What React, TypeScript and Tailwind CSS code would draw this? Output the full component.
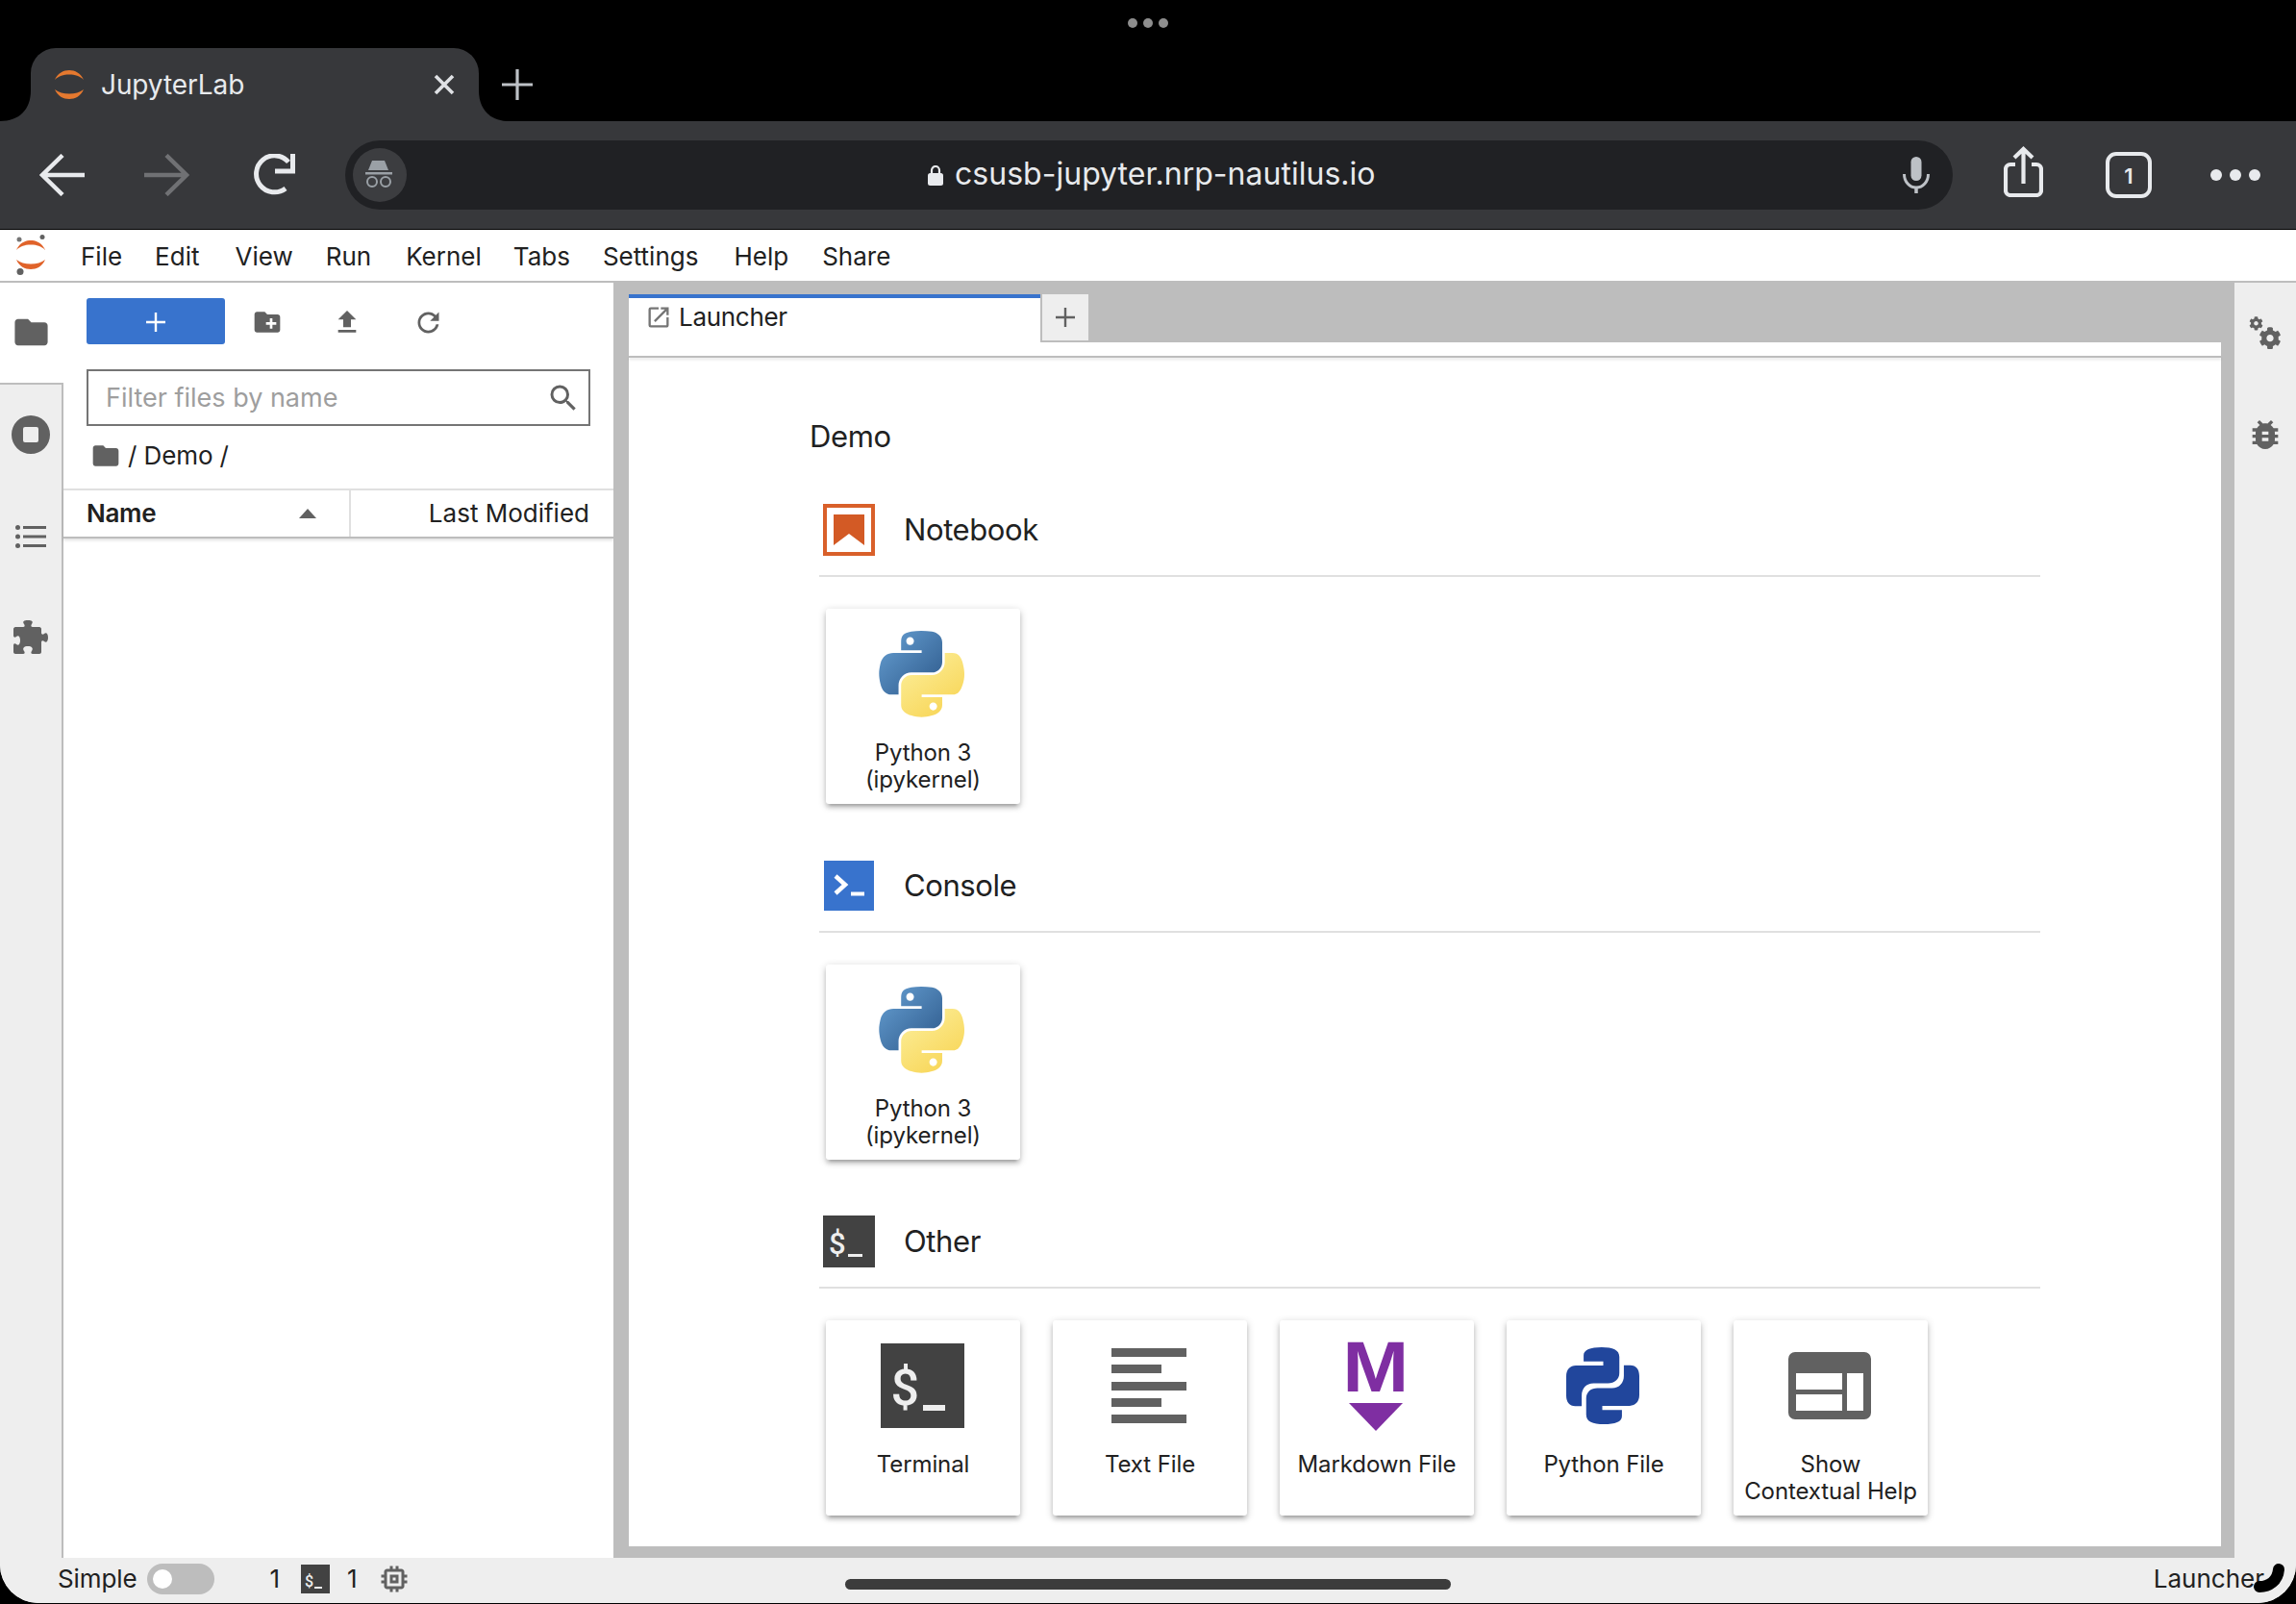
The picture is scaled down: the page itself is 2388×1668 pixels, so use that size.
import { FaCog } from "react-icons/fa";
import {
  MdBugReport,
  MdCreateNewFolder,
  MdFileUpload,
  MdFolder,
  MdMemory,
  MdOpenInNew,
  MdSearch,
} from "react-icons/md";

const menus = [
  { name: "File", cls: "ml-[36px]" },
  { name: "Edit", cls: "ml-[34px]" },
  { name: "View", cls: "ml-[37px]" },
  { name: "Run", cls: "ml-[34px]" },
  { name: "Kernel", cls: "ml-[36px]" },
  { name: "Tabs", cls: "ml-[33px]" },
  { name: "Settings", cls: "ml-[34px]" },
  { name: "Help", cls: "ml-[37px]" },
  { name: "Share", cls: "ml-[35px]" },
];

const BLUE_PATH =
  "M54.92.001C50.34.022 45.96.413 42.11 1.095 30.76 3.099 28.7 7.295 28.7 15.032v10.219h26.81v3.406H18.64c-7.79 0-14.62 4.684-16.75 13.594-2.46 10.213-2.57 16.586 0 27.25 1.91 7.938 6.46 13.594 14.25 13.594h9.22v-12.25c0-8.85 7.66-16.656 16.75-16.656h26.78c7.45 0 13.41-6.138 13.41-13.625V15.032c0-7.266-6.13-12.725-13.41-13.938C64.28.328 59.5-.02 54.92.001zm-14.5 8.219c2.77 0 5.03 2.299 5.03 5.125 0 2.816-2.26 5.094-5.03 5.094-2.78 0-5.03-2.278-5.03-5.094 0-2.826 2.25-5.125 5.03-5.125z";
const YELLOW_PATH =
  "M85.64 28.657v11.906c0 9.231-7.83 17-16.75 17H42.11c-7.34 0-13.41 6.278-13.41 13.625v25.531c0 7.266 6.32 11.54 13.41 13.625 8.48 2.496 16.62 2.947 26.78 0 6.75-1.954 13.4-5.888 13.4-13.625V86.501H55.51v-3.407h40.19c7.79 0 10.69-5.435 13.4-13.593 2.8-8.399 2.74-16.476 0-27.25-1.92-7.757-5.6-13.594-13.4-13.594zm-15.07 64.656c2.78 0 5.03 2.278 5.03 5.094 0 2.826-2.25 5.125-5.03 5.125-2.77 0-5.03-2.299-5.03-5.125 0-2.816 2.26-5.094 5.03-5.094z";

function PythonLogo({ id }: { id: string }) {
  return (
    <svg width="90" height="91" viewBox="0 0 112 114">
      <defs>
        <linearGradient id={`${id}b`} x1="0.1" y1="0.1" x2="0.75" y2="0.75">
          <stop offset="0" stopColor="#6199cc" />
          <stop offset="1" stopColor="#3b6a9c" />
        </linearGradient>
        <linearGradient id={`${id}y`} x1="0.3" y1="0.2" x2="0.8" y2="0.9">
          <stop offset="0" stopColor="#fbe98c" />
          <stop offset="1" stopColor="#f8d658" />
        </linearGradient>
      </defs>
      <path fill={`url(#${id}b)`} d={BLUE_PATH} />
      <path fill={`url(#${id}y)`} d={YELLOW_PATH} />
    </svg>
  );
}

const PY_PIECE =
  "M54 44V25C54 8 75 0 110 0C145 0 165 8 165 30V80C165 100 150 112 130 112H85C62 112 48 128 48 150V183H28C10 183 0 170 0 150V90C0 70 12 57 30 57H115V44Z";

function PythonFlat() {
  return (
    <svg width="76" height="80" viewBox="0 0 227 239" fill="#21469c">
      <path d={PY_PIECE} />
      <path d={PY_PIECE} transform="rotate(180 113.5 119.5)" />
    </svg>
  );
}

function JupyterArcs({ fill }: { fill: string }) {
  return (
    <g fill={fill}>
      <path d="M0 10C3 3 9 0 15 0C21 0 27 3 30 10C26 6 21 4.500 15 4.500C9 4.500 4 6 0 10Z" />
      <path d="M0 20C3 27 9 30 15 30C21 30 27 27 30 20C26 23 21 24.500 15 24.500C9 24.500 4 23 0 20Z" />
    </g>
  );
}

// the three sizes of the "$_" tile
function TermTile({ size }: { size: "lg" | "md" | "sm" }) {
  if (size === "lg") {
    return (
      <div className="w-[87px] h-[88px] bg-[#424242] flex items-start pt-[21px] pl-[11px] font-[family-name:Roboto,sans-serif] font-medium text-[#eeeeee]">
        <span className="text-[52px] leading-none">$</span>
        <div className="w-[23px] h-[6px] bg-[#eeeeee] ml-[4px] mt-[43px]" />
      </div>
    );
  }
  if (size === "md") {
    return (
      <div className="w-[54px] h-[54px] bg-[#424242] flex items-start pt-[14px] pl-[6px] font-[family-name:Roboto,sans-serif] font-medium text-[#eeeeee]">
        <span className="text-[31px] leading-none">$</span>
        <div className="w-[15px] h-[3px] bg-[#eeeeee] ml-[2px] mt-[26px]" />
      </div>
    );
  }
  return (
    <div className="w-[30px] h-[30px] bg-[#424242] flex items-start pt-[10px] pl-[4px] font-[family-name:Roboto,sans-serif] font-medium text-[#eeeeee]">
      <span className="text-[16px] leading-none">$</span>
      <div className="w-[8px] h-[2px] bg-[#eeeeee] ml-[1px] mt-[13px]" />
    </div>
  );
}

function Card({ icon, lines }: { icon: React.ReactNode; lines: string[] }) {
  return (
    <div className="w-[202px] h-[203px] bg-white rounded-[3px] shadow-[0_2px_8px_rgba(0,0,0,0.2),0_4px_4px_rgba(0,0,0,0.14),0_6px_2px_-4px_rgba(0,0,0,0.12)] flex flex-col items-center">
      <div className="h-[136px] shrink-0 flex items-center justify-center pr-[2px]">{icon}</div>
      <div className="text-[24px] leading-[28px] text-[#212121] text-center whitespace-nowrap tracking-[-0.1px]">
        {lines.map((l) => (
          <div key={l}>{l}</div>
        ))}
      </div>
    </div>
  );
}

function Section({ icon, title, children }: { icon: React.ReactNode; title: string; children: React.ReactNode }) {
  return (
    <div className="w-[1270px] ml-[198px] mb-[48px]">
      <div className="h-[74px] flex items-center pl-[4px] mb-[10px]">
        <div className="w-[54px] h-[54px] flex items-center justify-center">{icon}</div>
        <div className="ml-[30px] text-[31px] tracking-[-0.4px] text-[#212121]">{title}</div>
      </div>
      <div className="h-[2px] bg-[#e0e0e0]" />
      <div className="mt-[33px] pl-[7px] flex gap-[34px]">{children}</div>
    </div>
  );
}

function BrowserChrome() {
  return (
    <>
      {/* tab strip */}
      <div className="h-[126px] shrink-0 bg-black flex flex-col">
        <div className="h-[50px] flex items-center justify-center gap-[6px] pb-[2px]">
          <div className="w-[10px] h-[10px] rounded-full bg-[#8e8e8e]" />
          <div className="w-[10px] h-[10px] rounded-full bg-[#8e8e8e]" />
          <div className="w-[10px] h-[10px] rounded-full bg-[#8e8e8e]" />
        </div>
        <div className="h-[76px] flex items-end">
          <svg width="32" height="32" viewBox="0 0 32 32">
            <path d="M32 0V32H0C20 32 32 20 32 0Z" fill="#37383b" />
          </svg>
          <div className="w-[466px] h-[76px] bg-[#37383b] rounded-t-[26px] flex items-center pl-[25px]">
            <svg width="30" height="30" viewBox="0 0 30 30">
              <JupyterArcs fill="#e5792f" />
            </svg>
            <div className="ml-[18px] text-[28px] text-[#e8eaed] leading-none tracking-[-0.1px]">JupyterLab</div>
            <svg className="ml-auto mr-[25px]" width="22" height="22" viewBox="0 0 22 22">
              <path d="M2 2L20 20M20 2L2 20" stroke="#dfe1e5" strokeWidth="3.600" />
            </svg>
          </div>
          <svg width="32" height="32" viewBox="0 0 32 32">
            <path d="M0 0V32H32C12 32 0 20 0 0Z" fill="#37383b" />
          </svg>
          <svg className="self-center ml-[-8px]" width="32" height="32" viewBox="0 0 32 32">
            <path d="M16 0V32M0 16H32" stroke="#bdc1c6" strokeWidth="3.200" />
          </svg>
        </div>
      </div>

      {/* toolbar */}
      <div className="h-[113px] shrink-0 bg-[#37383b] border-b border-black flex items-center">
        <svg className="ml-[40px]" width="48" height="44" viewBox="0 0 48 44" fill="none" stroke="#e8eaed" strokeWidth="4.500">
          <path d="M48 22H5M25 1.500L4 22L25 42.500" />
        </svg>
        <svg className="ml-[62px]" width="48" height="44" viewBox="0 0 48 44" fill="none" stroke="#707174" strokeWidth="4.500">
          <path d="M0 22H43M23 1.500L44 22L23 42.500" />
        </svg>
        <svg className="ml-[64px]" width="45" height="44" viewBox="0 0 45 44" fill="none" stroke="#e8eaed" strokeWidth="5">
          <path d="M38 8.500A19 19 0 1 0 35 36" />
          <path d="M42.500 0V18H24" />
        </svg>
        <div className="ml-[52px] w-[1672px] h-[72px] bg-[#202124] rounded-full flex items-center pl-[8px] pr-[24px]">
          <div className="w-[56px] h-[56px] rounded-full bg-[#3c3d40] flex items-center justify-center">
            <svg width="30" height="30" viewBox="0 0 30 30" fill="#9aa0a6">
              <path d="M7 0H20L24 10H3Z" />
              <rect x="0" y="12" width="28" height="2.500" />
              <circle cx="7" cy="22" r="5" fill="none" stroke="#9aa0a6" strokeWidth="2" />
              <circle cx="21" cy="22" r="5" fill="none" stroke="#9aa0a6" strokeWidth="2" />
            </svg>
          </div>
          <svg className="ml-[542px]" width="16" height="21" viewBox="0 0 16 21" fill="#e8eaed">
            <path d="M4 8V5a4 4 0 0 1 8 0V8" fill="none" stroke="#e8eaed" strokeWidth="2.200" />
            <rect x="0" y="8" width="16" height="13" rx="2.500" />
          </svg>
          <div className="ml-[12px] mb-[3px] text-[32px] tracking-[0.02px] text-[#e8eaed] leading-none whitespace-nowrap">csusb-jupyter.nrp-nautilus.io</div>
          <svg className="ml-auto" width="28" height="38" viewBox="0 0 28 38" fill="none" stroke="#bdc1c6" strokeWidth="3">
            <rect x="8.500" y="0" width="11" height="25" rx="5.500" fill="#bdc1c6" stroke="none" />
            <path d="M1.500 18C1.500 26 7 32 14 32C21 32 26.500 26 26.500 18" />
            <path d="M14 32V38" strokeWidth="3.500" />
          </svg>
        </div>
        <svg className="ml-[53px] mb-[7px]" width="41" height="53" viewBox="0 0 41 53" fill="none" stroke="#e8eaed" strokeWidth="4.200">
          <path d="M12 19H7a5 5 0 0 0-5 5V46a5 5 0 0 0 5 5H34a5 5 0 0 0 5-5V24a5 5 0 0 0-5-5H29" />
          <path d="M20.500 39V3M11 12L20.500 3L30 12" />
        </svg>
        <div className="ml-[65px] w-[48px] h-[48px] rounded-[11px] border-[4px] border-[#e8eaed] flex items-center justify-center text-[22px] font-semibold text-[#e8eaed] leading-none pt-[2px]">
          1
        </div>
        <div className="ml-[61px] flex gap-[8px]">
          <div className="w-[12px] h-[12px] rounded-full bg-[#e8eaed]" />
          <div className="w-[12px] h-[12px] rounded-full bg-[#e8eaed]" />
          <div className="w-[12px] h-[12px] rounded-full bg-[#e8eaed]" />
        </div>
      </div>
    </>
  );
}

function FilePanel() {
  return (
    <div className="w-[572px] shrink-0 bg-white flex flex-col">
      <div className="h-[90px] pt-[16px] pl-[24px] flex items-start">
        <div className="w-[144px] h-[48px] bg-[#3873cd] rounded-[3px] flex items-center justify-center pt-[2px]">
          <svg width="20" height="20" viewBox="0 0 20 20">
            <path d="M10 0V20M0 10H20" stroke="#ffffff" strokeWidth="2.400" />
          </svg>
        </div>
        <MdCreateNewFolder className="ml-[28px] mt-[9px] text-[#616161]" size={32} />
        <MdFileUpload className="ml-[51px] mt-[9px] text-[#616161]" size={32} />
        <svg className="ml-[52px] mt-[9px]" width="33" height="33" viewBox="0 0 18 18" fill="#616161">
          <path d="M9 13.500c-2.490 0-4.500-2.010-4.500-4.500S6.510 4.500 9 4.500c1.240 0 2.360.520 3.170 1.330L10 8h5V3l-1.760 1.760C12.150 3.670 10.660 3 9 3 5.690 3 3.010 5.690 3.010 9S5.690 15 9 15c2.970 0 5.430-2.160 5.900-5h-1.520c-.460 2-2.240 3.500-4.380 3.500z" />
        </svg>
      </div>
      <div className="ml-[24px] w-[524px] h-[59px] border-2 border-[#757575] flex items-center pl-[18px] pr-[8px]">
        <span className="text-[27px] text-[#9e9e9e] leading-none">Filter files by name</span>
        <MdSearch className="ml-auto text-[#616161]" size={36} />
      </div>
      <div className="h-[65px] flex items-center pl-[28px] pb-[3px]">
        <MdFolder className="text-[#616161]" size={32} />
        <span className="ml-[7px] text-[26px] text-[#212121] leading-none tracking-[-0.1px]">/ Demo /</span>
      </div>
      <div className="h-[52px] border-t-2 border-[#e0e0e0] border-b-2 border-b-[#bdbdbd] shadow-[0_2px_3px_rgba(0,0,0,0.12)] flex">
        <div className="w-[299px] border-r-2 border-[#e0e0e0] flex items-center pl-[24px] pr-[34px] pb-[1px]">
          <span className="text-[26px] font-semibold text-[#212121] leading-none tracking-[-0.3px]">Name</span>
          <svg className="ml-auto" width="18" height="10" viewBox="0 0 18 10" fill="#616161">
            <path d="M9 0L18 10H0Z" />
          </svg>
        </div>
        <div className="flex-1 flex items-center justify-end pr-[25px] pb-[1px] text-[26px] text-[#212121] leading-none">Last Modified</div>
      </div>
    </div>
  );
}

function Launcher() {
  return (
    <div className="flex-1 bg-[#bdbdbd] pt-[12px] pl-[16px] pr-[14px] pb-[12px] flex flex-col">
      <div className="h-[50px] shrink-0 flex">
        <div className="w-[428px] h-[64px] bg-white border-t-[4px] border-[#3873cd] flex items-start pt-[6px] pl-[17px]">
          <MdOpenInNew className="text-[#757575]" size={28} />
          <span className="ml-[7px] text-[26px] tracking-[-0.3px] text-[#212121] leading-[28px]">Launcher</span>
        </div>
        <div className="w-[50px] h-[50px] bg-[#eeeeee] border-l-2 border-b-2 border-[#bdbdbd] flex items-center justify-center">
          <svg width="20" height="20" viewBox="0 0 20 20">
            <path d="M10 0V20M0 10H20" stroke="#616161" strokeWidth="2.400" />
          </svg>
        </div>
      </div>
      <div className="h-[14px] shrink-0 bg-white" />
      <div className="h-[2px] shrink-0 bg-[#bdbdbd] z-10 shadow-[0_2px_3px_rgba(0,0,0,0.12)]" />
      <div className="flex-1 bg-white pt-[62px] overflow-hidden">
        <div className="ml-[188px] h-[40px] mb-[40px] text-[31px] tracking-[-0.4px] leading-[40px] text-[#212121]">Demo</div>
        <Section
          title="Notebook"
          icon={
            <div className="w-[54px] h-[54px] border-[4px] border-[#d9602a] flex items-center justify-center">
              <svg width="32" height="32" viewBox="0 0 32 32" fill="#d35a25">
                <path d="M0 0H32V32L16 20L0 32Z" />
              </svg>
            </div>
          }
        >
          <Card icon={<PythonLogo id="nb" />} lines={["Python 3", "(ipykernel)"]} />
        </Section>
        <Section
          title="Console"
          icon={
            <div className="w-[52px] h-[52px] bg-[#3873cd] flex items-center justify-center">
              <svg width="32" height="24" viewBox="0 0 32 24" fill="none" stroke="#ffffff">
                <path d="M2 2L12 11L2 20" strokeWidth="4.500" />
                <path d="M18 20.500H32" strokeWidth="4" />
              </svg>
            </div>
          }
        >
          <Card icon={<PythonLogo id="co" />} lines={["Python 3", "(ipykernel)"]} />
        </Section>
        <Section title="Other" icon={<TermTile size="md" />}>
          <Card icon={<TermTile size="lg" />} lines={["Terminal"]} />
          <Card
            icon={
              <div className="w-[78px] h-[78px] flex flex-col justify-between">
                <div className="h-[9px] w-[78px] bg-[#616161]" />
                <div className="h-[9px] w-[52px] bg-[#616161]" />
                <div className="h-[9px] w-[78px] bg-[#616161]" />
                <div className="h-[9px] w-[52px] bg-[#616161]" />
                <div className="h-[9px] w-[78px] bg-[#616161]" />
              </div>
            }
            lines={["Text File"]}
          />
          <Card
            icon={
              <div className="flex flex-col items-center">
                <span className="font-[family-name:'Liberation_Sans',sans-serif] font-bold text-[74px] leading-[53px] h-[64px] text-[#7f2ea2] scale-x-[1.12] inline-block">M</span>
                <svg width="56" height="29" viewBox="0 0 56 29" fill="#7f2ea2">
                  <path d="M0 0H56L28 29Z" />
                </svg>
              </div>
            }
            lines={["Markdown File"]}
          />
          <Card icon={<PythonFlat />} lines={["Python File"]} />
          <Card
            icon={
              <svg width="86" height="70" viewBox="0 0 86 70" fill="#616161">
                <path
                  fillRule="evenodd"
                  d="M7 0H79A7 7 0 0 1 86 7V63A7 7 0 0 1 79 70H7A7 7 0 0 1 0 63V7A7 7 0 0 1 7 0ZM8 22V39H56V22ZM8 44V61H56V44ZM61 22V61H78V22Z"
                />
              </svg>
            }
            lines={["Show", "Contextual Help"]}
          />
        </Section>
      </div>
    </div>
  );
}

export default function App() {
  return (
    <div className="relative w-[2388px] h-[1668px] bg-black overflow-hidden flex flex-col font-[family-name:Inter,sans-serif]">
      <BrowserChrome />

      <div className="flex-1 bg-white flex flex-col mb-[1px] rounded-b-[40px] overflow-hidden min-h-0">
        {/* menu bar */}
        <div className="h-[55px] shrink-0 border-b-2 border-[#bdbdbd] flex items-center pl-[15px] pt-[2px] text-[26px] text-[#212121] leading-none">
          <svg className="mb-[4px]" width="33" height="42" viewBox="0 0 33 42">
            <g transform="translate(2 6)">
              <JupyterArcs fill="#e0632a" />
            </g>
            <circle cx="29" cy="2.500" r="2.500" fill="#616161" />
            <circle cx="5" cy="5" r="2.500" fill="#757575" />
            <circle cx="6" cy="38.500" r="3.500" fill="#616161" />
          </svg>
          {menus.map((m) => (
            <span key={m.name} className={m.cls}>
              {m.name}
            </span>
          ))}
        </div>

        <div className="flex-1 flex min-h-0">
          {/* left icon rail */}
          <div className="w-[66px] shrink-0 flex flex-col">
            <div className="h-[104px] shrink-0 bg-white flex items-start justify-center pt-[31px] pr-[2px]">
              <MdFolder className="text-[#616161]" size={41} />
            </div>
            <div className="flex-1 bg-[#eeeeee] border-t-2 border-r-2 border-[#bdbdbd] flex flex-col items-center pl-[1px]">
              <svg className="mt-[32px] mr-[1px]" width="40" height="40" viewBox="0 0 40 40" fill="#616161">
                <path
                  fillRule="evenodd"
                  d="M20 0A20 20 0 1 1 20 40A20 20 0 1 1 20 0ZM14 12A2 2 0 0 0 12 14V26A2 2 0 0 0 14 28H26A2 2 0 0 0 28 26V14A2 2 0 0 0 26 12Z"
                />
              </svg>
              <svg className="mt-[74px] mr-[1px]" width="32" height="24" viewBox="0 0 32 24" fill="#616161">
                <circle cx="2.500" cy="2.500" r="2.500" />
                <circle cx="2.500" cy="12" r="2.500" />
                <circle cx="2.500" cy="21.500" r="2.500" />
                <rect x="8" y="1" width="24" height="3" />
                <rect x="8" y="10.500" width="24" height="3" />
                <rect x="8" y="20" width="24" height="3" />
              </svg>
              <svg className="mt-[75px] mr-[1px]" width="36" height="35" viewBox="0 0 36 35" fill="#616161">
                <path d="M2 7H10C12 7 12 5 11 4C9 1 11 0 15 0C19 0 21 1 19 4C18 5 18 7 20 7H27C28 7 29 8 29 9V13C29 15 31 15 32 14C34 12 36 14 36 18C36 22 34 24 32 22C31 21 29 21 29 23V33C29 34 28 35 27 35H20C18 35 18 33 19 32C21 29 19 27 15 27C11 27 9 29 11 32C12 33 12 35 10 35H2C1 35 0 34 0 33V26C0 24 2 24 3 25C5 27 7 25 7 21C7 17 5 15 3 17C2 18 0 18 0 16V9C0 8 1 7 2 7Z" />
              </svg>
            </div>
          </div>

          <FilePanel />
          <Launcher />

          {/* right rail */}
          <div className="w-[64px] shrink-0 bg-[#eeeeee] flex flex-col items-center">
            <div className="mt-[35px] w-[34px] h-[34px] flex flex-col">
              <FaCog className="text-[#616161] self-start" size={15} />
              <FaCog className="text-[#616161] self-end mt-[-4px]" size={24} />
            </div>
            <MdBugReport className="mt-[69px] text-[#616161]" size={40} />
          </div>
        </div>

        {/* status bar */}
        <div className="h-[47px] shrink-0 bg-[#eeeeee] flex items-center pl-[60px] pr-[33px] pb-[3px] text-[26px] text-[#212121] leading-none">
          <span className="tracking-[-0.1px]">Simple</span>
          <div className="ml-[10px] w-[70px] h-[32px] rounded-full bg-[#bdbdbd] flex items-center pl-[6px]">
            <div className="w-[20px] h-[20px] rounded-full bg-white" />
          </div>
          <span className="ml-[58px]">1</span>
          <div className="ml-[22px]">
            <TermTile size="sm" />
          </div>
          <span className="ml-[18px]">1</span>
          <MdMemory className="ml-[20px] text-[#616161]" size={36} />
          <span className="ml-auto">Launcher</span>
        </div>
      </div>

      {/* system overlays: home indicator and pencil corner swoosh */}
      <div className="absolute left-[879px] top-[1642px] w-[630px] h-[11px] rounded-full bg-[#3c3c3c]" />
      <svg className="absolute left-[2340px] top-[1622px]" width="40" height="36" viewBox="0 0 40 36" fill="none">
        <path d="M10 28C20 28 29 22 30 10" stroke="#000000" strokeWidth="12" strokeLinecap="round" />
      </svg>
    </div>
  );
}
